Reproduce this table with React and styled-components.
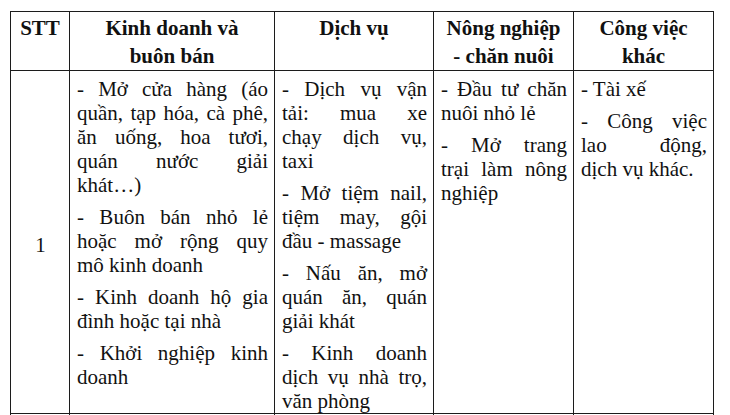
import React from "react";
import styled, { createGlobalStyle } from "styled-components";

const GlobalStyle = createGlobalStyle`
  html, body {
    margin: 0;
    padding: 0;
    background: #ffffff;
    overflow: hidden;
  }
  body {
    font-family: "Liberation Serif", "Times New Roman", serif;
    color: #111;
  }
`;

const Page = styled.div`
  padding: 11px 0 0 10px;
`;

const Table = styled.table`
  border-collapse: collapse;
  table-layout: fixed;
  width: 703px;
  font-family: "Liberation Serif", "Times New Roman", serif;
  font-size: 21px;
  color: #111;
`;

const HeadCell = styled.th`
  border: 1px solid #1c1c1c;
  height: 58px;
  box-sizing: border-box;
  padding: 2px 6px 0;
  vertical-align: top;
  text-align: center;
  font-weight: bold;
  line-height: 28px;
`;

const BodyCell = styled.td`
  border: 1px solid #1c1c1c;
  height: ${({ $height }) => $height || "343px"};
  box-sizing: border-box;
  padding: 6px 6px 0 7px;
  vertical-align: ${({ $middle }) => ($middle ? "middle" : "top")};
  text-align: ${({ $middle }) => ($middle ? "center" : "left")};
  line-height: 24px;
`;

const Para = styled.div`
  & + & {
    margin-top: 8px;
  }
`;

const Line = styled.div`
  text-align: ${({ $last }) => ($last ? "left" : "justify")};
  text-align-last: ${({ $last }) => ($last ? "left" : "justify")};
`;

const columns = [
  { width: 59, title: ["STT"] },
  { width: 205, title: ["Kinh doanh và", "buôn bán"] },
  { width: 159, title: ["Dịch vụ"] },
  { width: 140, title: ["Nông nghiệp", "- chăn nuôi"] },
  { width: 140, title: ["Công việc", "khác"] },
];

const cells = [
  [
    ["- Mở cửa hàng (áo", "quần, tạp hóa, cà phê,", "ăn uống, hoa tươi,", "quán nước giải", "khát…)"],
    ["- Buôn bán nhỏ lẻ", "hoặc mở rộng quy", "mô kinh doanh"],
    ["- Kinh doanh hộ gia", "đình hoặc tại nhà"],
    ["- Khởi nghiệp kinh", "doanh"],
  ],
  [
    ["- Dịch vụ vận", "tải: mua xe", "chạy dịch vụ,", "taxi"],
    ["- Mở tiệm nail,", "tiệm may, gội", "đầu - massage"],
    ["- Nấu ăn, mở", "quán ăn, quán", "giải khát"],
    ["- Kinh doanh", "dịch vụ nhà trọ,", "văn phòng"],
  ],
  [
    ["- Đầu tư chăn", "nuôi nhỏ lẻ"],
    ["- Mở trang", "trại làm nông", "nghiệp"],
  ],
  [
    ["- Tài xế"],
    ["- Công việc", "lao động,", "dịch vụ khác."],
  ],
];

const App = () => {
  return (
    <Page>
      <GlobalStyle />
      <Table>
        <colgroup>
          {columns.map((c, i) => (
            <col key={i} style={{ width: c.width }} />
          ))}
        </colgroup>
        <thead>
          <tr>
            {columns.map((c, i) => (
              <HeadCell key={i}>
                {c.title.map((t, j) => (
                  <div key={j}>{t}</div>
                ))}
              </HeadCell>
            ))}
          </tr>
        </thead>
        <tbody>
          <tr>
            <BodyCell $middle>1</BodyCell>
            {cells.map((paras, i) => (
              <BodyCell key={i}>
                {paras.map((lines, j) => (
                  <Para key={j}>
                    {lines.map((l, k) => (
                      <Line key={k} $last={k === lines.length - 1}>
                        {l}
                      </Line>
                    ))}
                  </Para>
                ))}
              </BodyCell>
            ))}
          </tr>
          <tr>
            {columns.map((c, i) => (
              <BodyCell key={i} $height="30px" />
            ))}
          </tr>
        </tbody>
      </Table>
    </Page>
  );
};

export default App;
